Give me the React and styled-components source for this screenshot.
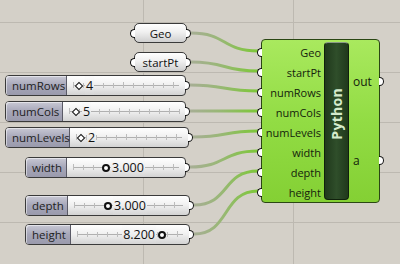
import React from "react";
import styled, { createGlobalStyle } from "styled-components";

const GlobalStyle = createGlobalStyle`
  html, body { margin: 0; padding: 0; }
  body {
    width: 400px;
    height: 264px;
    overflow: hidden;
    font-family: "Open Sans", "Noto Sans", sans-serif;
  }
`;

const Canvas = styled.div`
  position: relative;
  width: 400px;
  height: 264px;
  overflow: hidden;
  background-color: #d4d0c8;
  background-image: linear-gradient(to bottom, #bdb9b1 1px, transparent 1px),
    linear-gradient(to right, #bdb9b1 1px, transparent 1px);
  background-size: 100% 50px, 150px 100%;
  background-position: 0 22px, 143px 0;
`;

const Wires = styled.svg`
  position: absolute;
  left: 0;
  top: 0;
`;

const Grip = styled.span`
  position: absolute;
  top: 50%;
  width: 5px;
  height: 9px;
  margin-top: -4.5px;
  box-sizing: border-box;
  background: #fff;
  border: 1.5px solid #111;
  ${(p) =>
    p.$side === "left"
      ? "right: 100%; border-right: none; border-radius: 5px 0 0 5px;"
      : "left: 100%; border-left: none; border-radius: 0 5px 5px 0;"}
`;

/* ---------- panels ---------- */
const Panel = styled.div`
  position: absolute;
  left: ${(p) => p.$x}px;
  top: ${(p) => p.$y}px;
  width: 53px;
  height: 20px;
  box-sizing: border-box;
  display: flex;
  align-items: center;
  justify-content: center;
  font-size: 11.5px;
  color: #111;
  border: 1px solid #3a3a3a;
  border-radius: 5px;
  background: linear-gradient(to bottom, #ffffff, #f0f0f0 45%, #cfcfcf);
`;

/* ---------- sliders ---------- */
const Slider = styled.div`
  position: absolute;
  left: ${(p) => p.$x}px;
  top: ${(p) => p.$y}px;
  width: ${(p) => p.$w}px;
  height: 21px;
  box-sizing: border-box;
  display: flex;
  border: 1px solid #3a3a3a;
  border-radius: 4px;
  background: linear-gradient(to bottom, #ffffff, #efefef 50%, #d3d3d3);
`;

const SliderLabel = styled.div`
  width: ${(p) => p.$w}px;
  box-sizing: border-box;
  display: flex;
  align-items: center;
  padding-left: 6px;
  font-size: 11.5px;
  color: #1e1e1e;
  border-right: 1px solid #5a5a66;
  border-radius: 3px 0 0 3px;
  background: linear-gradient(to bottom, #c8c8d4, #a6a6b8 50%, #9a9aac);
  box-shadow: inset 1px 1px 0 rgba(255, 255, 255, 0.5);
`;

const SliderBody = styled.div`
  position: relative;
  flex: 1;
`;

const Track = styled.svg`
  position: absolute;
  left: 0;
  top: 0;
`;

const Knob = styled.span`
  position: absolute;
  top: 50%;
  box-sizing: border-box;
  background: #fff;
  border: 2px solid #111;
  ${(p) =>
    p.$round
      ? "width: 8px; height: 8px; margin: -4px 0 0 -4px; border-radius: 50%;"
      : "width: 6px; height: 6px; margin: -3px 0 0 -3px; border-width: 1.5px; transform: rotate(45deg);"}
`;

const Value = styled.span`
  position: absolute;
  top: 0;
  height: 19px;
  line-height: 19px;
  padding: 0 1px;
  font-size: 12.5px;
  color: #111;
  background: linear-gradient(to bottom, #fdfdfd, #eeeeee 50%, #d5d5d5);
`;

/* ---------- python component ---------- */
const Component = styled.div`
  position: absolute;
  left: 261px;
  top: 39px;
  width: 119px;
  height: 164px;
  box-sizing: border-box;
  display: flex;
  padding: 2px 0;
  border: 1px solid #2b4714;
  border-radius: 4px;
  background: linear-gradient(to bottom, #a9e95e, #92dc44 50%, #84d034);
  color: #14220c;
  font-size: 11px;
`;

const Inputs = styled.div`
  width: 62px;
  display: flex;
  flex-direction: column;
`;

const Port = styled.div`
  position: relative;
  height: 20px;
  display: flex;
  align-items: center;
  justify-content: ${(p) => (p.$out ? "flex-start" : "flex-end")};
  padding: ${(p) => (p.$out ? "0 0 0 4px" : "0 3px 0 0")};
  flex: ${(p) => (p.$out ? 1 : "none")};
  font-size: ${(p) => (p.$out ? "12px" : "11px")};
`;

const Bar = styled.div`
  width: 25px;
  box-sizing: border-box;
  display: flex;
  align-items: center;
  justify-content: center;
  border: 1px solid #10200c;
  border-top-color: #8a9a86;
  border-radius: 4px;
  background: linear-gradient(to right, #20391c, #2f4e2a 50%, #20391c);
`;

const BarTitle = styled.span`
  writing-mode: vertical-rl;
  transform: rotate(180deg);
  margin-bottom: 14px;
  font-size: 14px;
  font-weight: 700;
  letter-spacing: 0.3px;
  color: #d6ebcc;
`;

const Outputs = styled.div`
  flex: 1;
  position: relative;
  display: flex;
  flex-direction: column;
`;

const sliders = [
  { name: "numRows", x: 5, y: 75, w: 181, lw: 61, knob: 12, value: "4" },
  { name: "numCols", x: 5, y: 101, w: 181, lw: 57, knob: 13, value: "5" },
  { name: "numLevels", x: 5, y: 127, w: 184, lw: 64, knob: 11, value: "2" },
  { name: "width", x: 25, y: 157, w: 161, lw: 41, knob: 39, value: "3.000", round: true },
  { name: "depth", x: 25, y: 195, w: 165, lw: 42, knob: 40, value: "3.000", round: true },
  { name: "height", x: 25, y: 224, w: 165, lw: 45, knob: 91, value: "8.200", round: true, before: true },
];

const inputs = ["Geo", "startPt", "numRows", "numCols", "numLevels", "width", "depth", "height"];

const wires = [
  [191, 33, 258, 51],
  [191, 62, 258, 71],
  [190, 85, 258, 91],
  [190, 111, 258, 111],
  [193, 137, 258, 131],
  [190, 167, 258, 151],
  [194, 205, 258, 171],
  [194, 234, 258, 191],
];

function SliderTrack({ width }) {
  const start = 6;
  const end = width - 6;
  const ticks = [];
  for (let t = start; t <= end; t += 10) ticks.push(t);
  return (
    <Track width={width} height={19}>
      <line x1={start} y1={9.5} x2={end} y2={9.5} stroke="#b0b0b0" strokeWidth="1" />
      {ticks.map((t, i) => (
        <line
          key={t}
          x1={t + 0.5}
          x2={t + 0.5}
          y1={i % 5 === 0 ? 6 : 7}
          y2={12}
          stroke="#bcbcbc"
          strokeWidth="1"
        />
      ))}
    </Track>
  );
}

export default function App() {
  return (
    <Canvas>
      <GlobalStyle />
      <Wires width={400} height={264}>
        <defs>
          {wires.map(([sx, , ex], i) => (
            <linearGradient key={i} id={`w${i}`} gradientUnits="userSpaceOnUse" x1={sx} y1="0" x2={ex} y2="0">
              <stop offset="0" stopColor="#a7ae95" />
              <stop offset="0.45" stopColor="#98b874" />
              <stop offset="1" stopColor="#7cc836" />
            </linearGradient>
          ))}
        </defs>
        {wires.map(([sx, sy, ex, ey], i) => (
          <path
            key={i}
            d={`M${sx} ${sy} C${sx + 36} ${sy}, ${ex - 36} ${ey}, ${ex} ${ey}`}
            fill="none"
            stroke={`url(#w${i})`}
            strokeWidth="3"
          />
        ))}
      </Wires>

      <Panel $x={134} $y={23}>
        <Grip $side="left" />
        Geo
        <Grip $side="right" />
      </Panel>
      <Panel $x={134} $y={52}>
        <Grip $side="left" />
        startPt
        <Grip $side="right" />
      </Panel>

      {sliders.map((s) => {
        const bodyW = s.w - s.lw - 2;
        return (
          <Slider key={s.name} $x={s.x} $y={s.y} $w={s.w}>
            <SliderLabel $w={s.lw}>{s.name}</SliderLabel>
            <SliderBody>
              <SliderTrack width={bodyW} />
              {s.before ? (
                <Value style={{ right: bodyW - s.knob + 6 }}>{s.value}</Value>
              ) : (
                <Value style={{ left: s.knob + (s.round ? 5 : 6) }}>{s.value}</Value>
              )}
              <Knob $round={s.round} style={{ left: s.knob }} />
            </SliderBody>
            <Grip $side="right" />
          </Slider>
        );
      })}

      <Component>
        <Inputs>
          {inputs.map((name) => (
            <Port key={name}>
              <Grip $side="left" />
              {name}
            </Port>
          ))}
        </Inputs>
        <Bar>
          <BarTitle>Python</BarTitle>
        </Bar>
        <Outputs>
          <Port $out>
            out
            <Grip $side="right" />
          </Port>
          <Port $out>
            a
            <Grip $side="right" />
          </Port>
        </Outputs>
      </Component>
    </Canvas>
  );
}
